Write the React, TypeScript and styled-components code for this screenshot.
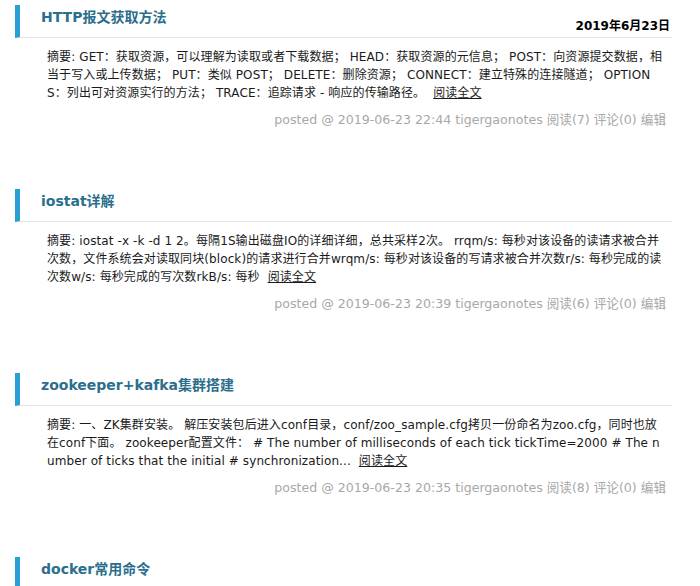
import React from "react";
import styled, { createGlobalStyle } from "styled-components";

type PostItem = {
  title: string;
  date?: string;
  lines: string[];
  posted: string;
  reads: number;
};

// summary text is kept as the lines the blog list shows
const POSTS: PostItem[] = [
  {
    title: "HTTP报文获取方法",
    date: "2019年6月23日",
    lines: [
      "摘要: GET：获取资源，可以理解为读取或者下载数据； HEAD：获取资源的元信息； POST：向资源提交数据，相",
      "当于写入或上传数据； PUT：类似 POST； DELETE：删除资源； CONNECT：建立特殊的连接隧道； OPTION",
      "S：列出可对资源实行的方法； TRACE：追踪请求 - 响应的传输路径。",
    ],
    posted: "2019-06-23 22:44",
    reads: 7,
  },
  {
    title: "iostat详解",
    lines: [
      "摘要: iostat -x -k -d 1 2。每隔1S输出磁盘IO的详细详细，总共采样2次。 rrqm/s: 每秒对该设备的读请求被合并",
      "次数，文件系统会对读取同块(block)的请求进行合并wrqm/s: 每秒对该设备的写请求被合并次数r/s: 每秒完成的读",
      "次数w/s: 每秒完成的写次数rkB/s: 每秒",
    ],
    posted: "2019-06-23 20:39",
    reads: 6,
  },
  {
    title: "zookeeper+kafka集群搭建",
    lines: [
      "摘要: 一、ZK集群安装。 解压安装包后进入conf目录，conf/zoo_sample.cfg拷贝一份命名为zoo.cfg，同时也放",
      "在conf下面。 zookeeper配置文件： # The number of milliseconds of each tick tickTime=2000 # The n",
      "umber of ticks that the initial # synchronization...",
    ],
    posted: "2019-06-23 20:35",
    reads: 8,
  },
  {
    title: "docker常用命令",
    lines: [],
    posted: "",
    reads: 0,
  },
];

export default function App() {
  return (
    <>
      <GlobalStyle />
      <Page>
        {POSTS.map((post) => (
          <Post key={post.title}>
            <PostHeader>
              <PostTitle href="#">{post.title}</PostTitle>
              {post.date && <DayTitle>{post.date}</DayTitle>}
            </PostHeader>
            {post.lines.length > 0 && (
              <>
                <Summary>
                  {post.lines.map((line, i) => (
                    <SummaryLine key={i}>
                      {line}
                      {i === post.lines.length - 1 && (
                        <ReadMore href="#">阅读全文</ReadMore>
                      )}
                    </SummaryLine>
                  ))}
                </Summary>
                <PostDesc>
                  posted @ {post.posted} tigergaonotes 阅读({post.reads}) 评论(0){" "}
                  <EditLink href="#">编辑</EditLink>
                </PostDesc>
              </>
            )}
          </Post>
        ))}
      </Page>
    </>
  );
}

const GlobalStyle = createGlobalStyle`
  html, body {
    margin: 0;
    padding: 0;
    background: #fff;
    overflow: hidden;
  }
  body {
    font-family: "DejaVu Sans", Verdana, "Noto Sans CJK SC", sans-serif;
    font-size: 12px;
    color: #222;
  }
`;

const Page = styled.div`
  width: 657px;
  height: 581px;
  overflow: hidden;
  margin-left: 15px;
  padding-top: 5px;
`;

const Post = styled.div`
  margin-bottom: 60px;
`;

const PostHeader = styled.div`
  display: flex;
  justify-content: space-between;
  align-items: flex-start;
  height: 32px;
  border-left: 5px solid #2a9fd6;
  border-bottom: 1px solid #e2e2e2;
  padding: 0 2px 0 21px;
`;

const PostTitle = styled.a`
  font-size: 14px;
  font-weight: bold;
  line-height: 24px;
  color: #2b6f8c;
  text-decoration: none;
`;

const DayTitle = styled.div`
  font-size: 12px;
  font-weight: bold;
  color: #000;
  line-height: 16px;
  margin-top: 13px;
`;

const Summary = styled.div`
  margin-top: 10px;
  padding-left: 32px;
  color: #1a1a1a;
`;

const SummaryLine = styled.div`
  line-height: 18px;
  white-space: nowrap;
  letter-spacing: 0.1px;
`;

const ReadMore = styled.a`
  margin-left: 8px;
  color: #1a1a1a;
  text-decoration: underline;
`;

const PostDesc = styled.div`
  margin-top: 9px;
  padding-right: 6px;
  text-align: right;
  font-size: 12.6px;
  line-height: 18px;
  color: #a8a8a8;
`;

const EditLink = styled.a`
  color: #a8a8a8;
  text-decoration: none;
`;
